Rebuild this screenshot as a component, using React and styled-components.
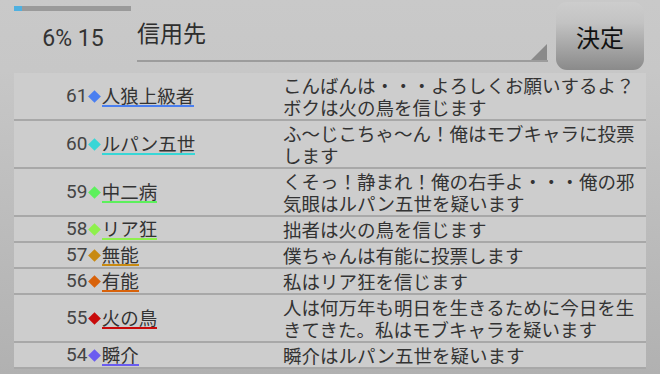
import React from "react";
import styled, { createGlobalStyle } from "styled-components";

const GlobalStyle = createGlobalStyle`
  html, body {
    margin: 0;
    padding: 0;
  }
  body {
    width: 660px;
    height: 374px;
    overflow: hidden;
    background: linear-gradient(180deg, #c9c9c9 0px, #c7c7c7 70px, #b1b1b1 374px);
    font-family: Roboto, "Noto Sans CJK JP", sans-serif;
    color: #353535;
  }
`;

const Screen = styled.div`
  width: 660px;
  height: 374px;
  overflow: hidden;
  display: flex;
  flex-direction: column;
`;

const Header = styled.div`
  flex-shrink: 0;
  display: flex;
  align-items: flex-start;
  height: 73px;
  padding-left: 14px;
  box-sizing: border-box;
`;

const Status = styled.div`
  width: 117px;
  display: flex;
  flex-direction: column;
  align-items: center;
  padding-top: 6px;
`;

const Progress = styled.div`
  width: 100%;
  height: 5px;
  background: #9a9a9a;
  display: flex;
`;

const ProgressFill = styled.div`
  height: 100%;
  background: #4fb0e0;
`;

const Count = styled.div`
  margin-top: 15px;
  font-size: 23px;
  line-height: 26px;
  color: #333;
  padding-left: 1px;
`;

const Spinner = styled.div`
  position: relative;
  margin-left: 6px;
  width: 411px;
  height: 62px;
  box-sizing: border-box;
  border-bottom: 2px solid #9c9c9c;
  font-family: "Noto Sans CJK JP", sans-serif;
  font-size: 23px;
  line-height: 30px;
  padding-top: 17px;
  color: #2e2e2e;
  &::after {
    content: "";
    position: absolute;
    right: 1px;
    bottom: 0;
    width: 0;
    height: 0;
    border-style: solid;
    border-width: 0 0 16px 16px;
    border-color: transparent transparent #8a8a8a transparent;
  }
`;

const Button = styled.button`
  margin-left: 8px;
  margin-top: 2px;
  width: 88px;
  height: 68px;
  border: none;
  border-radius: 11px;
  background: linear-gradient(180deg, #cdcdcd 0%, #c3c3c3 30%, #8a8a8a 100%);
  font-family: "Noto Sans CJK JP", sans-serif;
  font-size: 24px;
  color: #111;
  padding: 0;
`;

const Panel = styled.div`
  flex-shrink: 0;
  margin-left: 14px;
  width: 632px;
  background: #cdcdcd;
`;

const Row = styled.div`
  display: grid;
  grid-template-columns: 269px 1fr;
  border-bottom: 2px solid #a8a8a8;
  padding: 1px 0;
`;

const Who = styled.div`
  display: flex;
  align-items: center;
  padding-left: 52px;
  font-size: 18.5px;
  height: 100%;
`;

const Num = styled.span`
  color: #444;
  font-size: 19px;
  line-height: 22px;
`;

const Diamond = styled.span`
  display: inline-block;
  flex-shrink: 0;
  width: 9px;
  height: 9px;
  margin: 0 2.5px 0 3px;
  background: ${(p) => p.$color};
  transform: rotate(45deg);
`;

const Name = styled.span`
  display: inline-block;
  line-height: 20px;
  border-bottom: 2px solid ${(p) => p.$color};
  color: #333;
  font-family: "Noto Sans CJK JP", sans-serif;
`;

const Message = styled.div`
  font-family: "Noto Sans CJK JP", sans-serif;
  font-size: 18.5px;
  line-height: 22px;
  color: #333;
  padding-right: 8px;
`;

const rows = [
  { n: 61, name: "人狼上級者", color: "#4a7ff0", msg: "こんばんは・・・よろしくお願いするよ？ボクは火の鳥を信じます" },
  { n: 60, name: "ルパン五世", color: "#37d6d6", msg: "ふ～じこちゃ～ん！俺はモブキャラに投票します" },
  { n: 59, name: "中二病", color: "#5cf05c", msg: "くそっ！静まれ！俺の右手よ・・・俺の邪気眼はルパン五世を疑います" },
  { n: 58, name: "リア狂", color: "#8ef04c", msg: "拙者は火の鳥を信じます" },
  { n: 57, name: "無能", color: "#c88a12", msg: "僕ちゃんは有能に投票します" },
  { n: 56, name: "有能", color: "#d8620a", msg: "私はリア狂を信じます" },
  { n: 55, name: "火の鳥", color: "#c80a0a", msg: "人は何万年も明日を生きるために今日を生きてきた。私はモブキャラを疑います" },
  { n: 54, name: "瞬介", color: "#6a5cf0", msg: "瞬介はルパン五世を疑います" },
];

export default function App() {
  return (
    <>
      <GlobalStyle />
      <Screen>
        <Header>
          <Status>
            <Progress>
              <ProgressFill style={{ width: `${(8 / 117) * 100}%` }} />
            </Progress>
            <Count>6% 15</Count>
          </Status>
          <Spinner>信用先</Spinner>
          <Button>決定</Button>
        </Header>
        <Panel>
          {rows.map((r) => (
            <Row key={r.n}>
              <Who>
                <Num>{r.n}</Num>
                <Diamond $color={r.color} />
                <Name $color={r.color}>{r.name}</Name>
              </Who>
              <Message>{r.msg}</Message>
            </Row>
          ))}
        </Panel>
      </Screen>
    </>
  );
}
